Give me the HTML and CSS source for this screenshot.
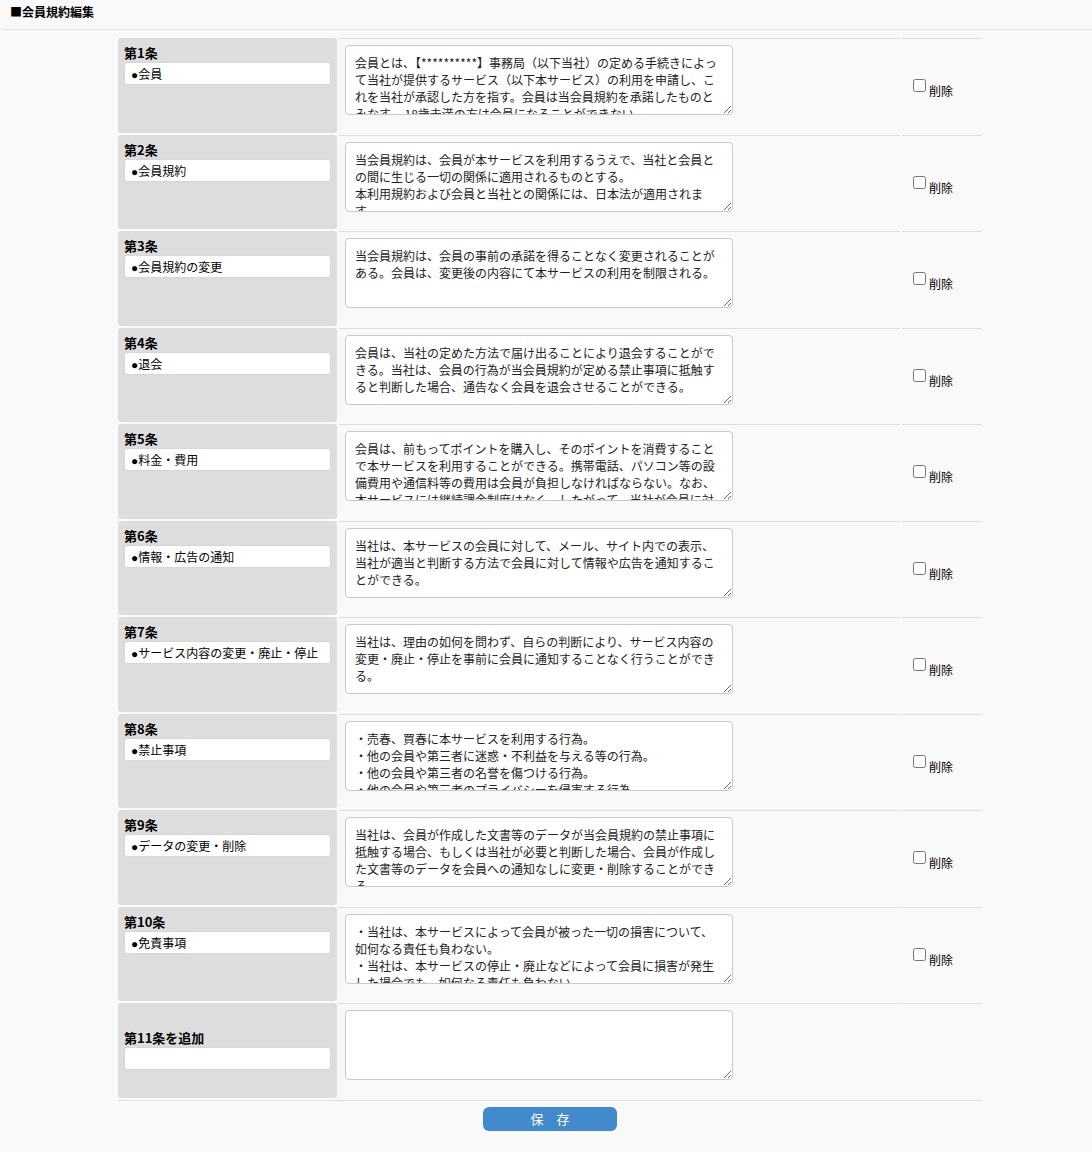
FILE: index.html
```html
<!DOCTYPE html>
<html lang="ja">

<head>
    <meta charset="UTF-8">
    <title>会員規約編集</title>
    <link rel="stylesheet" href="styles.css">
</head>

<body>
    <div class="page-title">■会員規約編集</div>

    <form id="kiyakuForm">
        <table class="kiyaku-table">
            <tbody>
                <tr class="clause-row">
                    <th>
                        <div class="clause-no">第1条</div>
                        <input type="text" class="clause-title" value="●会員">
                    </th>
                    <td class="clause-body">
                        <textarea>会員とは、【**********】事務局（以下当社）の定める手続きによって当社が提供するサービス（以下本サービス）の利用を申請し、これを当社が承認した方を指す。会員は当会員規約を承諾したものとみなす。 18歳未満の方は会員になることができない。</textarea>
                    </td>
                    <td class="clause-del">
                        <label class="del-label"><input type="checkbox"><span>削除</span></label>
                    </td>
                </tr>
                <tr class="clause-row">
                    <th>
                        <div class="clause-no">第2条</div>
                        <input type="text" class="clause-title" value="●会員規約">
                    </th>
                    <td class="clause-body">
                        <textarea>当会員規約は、会員が本サービスを利用するうえで、当社と会員との間に生じる一切の関係に適用されるものとする。
本利用規約および会員と当社との関係には、日本法が適用されます。</textarea>
                    </td>
                    <td class="clause-del">
                        <label class="del-label"><input type="checkbox"><span>削除</span></label>
                    </td>
                </tr>
                <tr class="clause-row">
                    <th>
                        <div class="clause-no">第3条</div>
                        <input type="text" class="clause-title" value="●会員規約の変更">
                    </th>
                    <td class="clause-body">
                        <textarea>当会員規約は、会員の事前の承諾を得ることなく変更されることがある。会員は、変更後の内容にて本サービスの利用を制限される。</textarea>
                    </td>
                    <td class="clause-del">
                        <label class="del-label"><input type="checkbox"><span>削除</span></label>
                    </td>
                </tr>
                <tr class="clause-row">
                    <th>
                        <div class="clause-no">第4条</div>
                        <input type="text" class="clause-title" value="●退会">
                    </th>
                    <td class="clause-body">
                        <textarea>会員は、当社の定めた方法で届け出ることにより退会することができる。当社は、会員の行為が当会員規約が定める禁止事項に抵触すると判断した場合、通告なく会員を退会させることができる。</textarea>
                    </td>
                    <td class="clause-del">
                        <label class="del-label"><input type="checkbox"><span>削除</span></label>
                    </td>
                </tr>
                <tr class="clause-row">
                    <th>
                        <div class="clause-no">第5条</div>
                        <input type="text" class="clause-title" value="●料金・費用">
                    </th>
                    <td class="clause-body">
                        <textarea>会員は、前もってポイントを購入し、そのポイントを消費することで本サービスを利用することができる。携帯電話、パソコン等の設備費用や通信料等の費用は会員が負担しなければならない。なお、本サービスには継続課金制度はなく、したがって、当社が会員に対して定期的に費用を請求することはない。</textarea>
                    </td>
                    <td class="clause-del">
                        <label class="del-label"><input type="checkbox"><span>削除</span></label>
                    </td>
                </tr>
                <tr class="clause-row">
                    <th>
                        <div class="clause-no">第6条</div>
                        <input type="text" class="clause-title" value="●情報・広告の通知">
                    </th>
                    <td class="clause-body">
                        <textarea>当社は、本サービスの会員に対して、メール、サイト内での表示、当社が適当と判断する方法で会員に対して情報や広告を通知することができる。</textarea>
                    </td>
                    <td class="clause-del">
                        <label class="del-label"><input type="checkbox"><span>削除</span></label>
                    </td>
                </tr>
                <tr class="clause-row">
                    <th>
                        <div class="clause-no">第7条</div>
                        <input type="text" class="clause-title" value="●サービス内容の変更・廃止・停止">
                    </th>
                    <td class="clause-body">
                        <textarea>当社は、理由の如何を問わず、自らの判断により、サービス内容の変更・廃止・停止を事前に会員に通知することなく行うことができる。</textarea>
                    </td>
                    <td class="clause-del">
                        <label class="del-label"><input type="checkbox"><span>削除</span></label>
                    </td>
                </tr>
                <tr class="clause-row">
                    <th>
                        <div class="clause-no">第8条</div>
                        <input type="text" class="clause-title" value="●禁止事項">
                    </th>
                    <td class="clause-body">
                        <textarea>・売春、買春に本サービスを利用する行為。
・他の会員や第三者に迷惑・不利益を与える等の行為。
・他の会員や第三者の名誉を傷つける行為。
・他の会員や第三者のプライバシーを侵害する行為。</textarea>
                    </td>
                    <td class="clause-del">
                        <label class="del-label"><input type="checkbox"><span>削除</span></label>
                    </td>
                </tr>
                <tr class="clause-row">
                    <th>
                        <div class="clause-no">第9条</div>
                        <input type="text" class="clause-title" value="●データの変更・削除">
                    </th>
                    <td class="clause-body">
                        <textarea>当社は、会員が作成した文書等のデータが当会員規約の禁止事項に抵触する場合、もしくは当社が必要と判断した場合、会員が作成した文書等のデータを会員への通知なしに変更・削除することができる。</textarea>
                    </td>
                    <td class="clause-del">
                        <label class="del-label"><input type="checkbox"><span>削除</span></label>
                    </td>
                </tr>
                <tr class="clause-row">
                    <th>
                        <div class="clause-no">第10条</div>
                        <input type="text" class="clause-title" value="●免責事項">
                    </th>
                    <td class="clause-body">
                        <textarea>・当社は、本サービスによって会員が被った一切の損害について、如何なる責任も負わない。
・当社は、本サービスの停止・廃止などによって会員に損害が発生した場合でも、如何なる責任も負わない。</textarea>
                    </td>
                    <td class="clause-del">
                        <label class="del-label"><input type="checkbox"><span>削除</span></label>
                    </td>
                </tr>
                <tr class="clause-row clause-new">
                    <th>
                        <div class="clause-no">第11条を追加</div>
                        <input type="text" class="clause-title" value="">
                    </th>
                    <td class="clause-body">
                        <textarea></textarea>
                    </td>
                    <td class="clause-del"></td>
                </tr>
            </tbody>
            <tfoot>
                <tr>
                    <td colspan="3" class="save-cell">
                        <button type="submit" class="btn-save">保　存</button>
                    </td>
                </tr>
            </tfoot>
        </table>
    </form>
</body>

</html>
```

FILE: styles.css
```css
body {
    font-family: "Noto Sans CJK JP", "Liberation Sans", sans-serif;
    font-size: 12px;
    line-height: 17px;
    color: #000;
    background-color: #f9f9f9;
    margin: 0;
}

.page-title {
    margin-left: 2px;
    padding: 3px 8px 9px;
    font-weight: bold;
    border-bottom: 1px solid #e2e2e2;
}

.kiyaku-table {
    margin: 6px 0 0 116px;
    width: 868px;
    border-collapse: separate;
    border-spacing: 2px;
    table-layout: fixed;
}

.clause-row {
    height: 94.5px;
}

.clause-row th {
    width: 207px;
    padding: 6px 6px 0;
    background: #dddddd;
    border-radius: 3px;
    text-align: left;
    vertical-align: top;
}

.clause-new th {
    vertical-align: middle;
    padding: 0 6px 2px;
}

.clause-no {
    font-size: 13px;
    font-weight: bold;
    margin-bottom: 1px;
}

.clause-title {
    display: block;
    box-sizing: border-box;
    width: 100%;
    height: 23px;
    padding: 0 6px;
    border: 1px solid #d6d6d6;
    border-radius: 3px;
    background: #fff;
    font-family: "Liberation Sans", "Noto Sans CJK JP", sans-serif;
    font-size: 12px;
    color: #000;
}

.clause-body {
    border-top: 1px solid #dedede;
    padding: 6px 6px 0;
    vertical-align: top;
}

.clause-body textarea {
    display: block;
    box-sizing: border-box;
    width: 388px;
    height: 70px;
    padding: 8px 9px;
    border: 1px solid #c9c9c9;
    border-radius: 4px;
    background: #fff;
    font-family: inherit;
    font-size: 12px;
    line-height: 17px;
    color: #222;
    overflow: hidden;
}

.clause-del {
    width: 69px;
    border-top: 1px solid #dedede;
    padding: 0 0 0 11px;
    vertical-align: middle;
}

.del-label {
    display: inline-flex;
    align-items: center;
}

.del-label input {
    margin: 0 3px 0 0;
    width: 13px;
    height: 13px;
}

.del-label span {
    padding-top: 10px;
}

.save-cell {
    border-top: 1px solid #dedede;
    padding: 6px 0 20px;
    text-align: center;
}

.btn-save {
    width: 134px;
    height: 24px;
    border: none;
    border-radius: 6px;
    background-color: #428acb;
    color: #fff;
    font-family: inherit;
    font-size: 13px;
    cursor: pointer;
}

.btn-save:hover {
    background-color: #3072b0;
}
```
